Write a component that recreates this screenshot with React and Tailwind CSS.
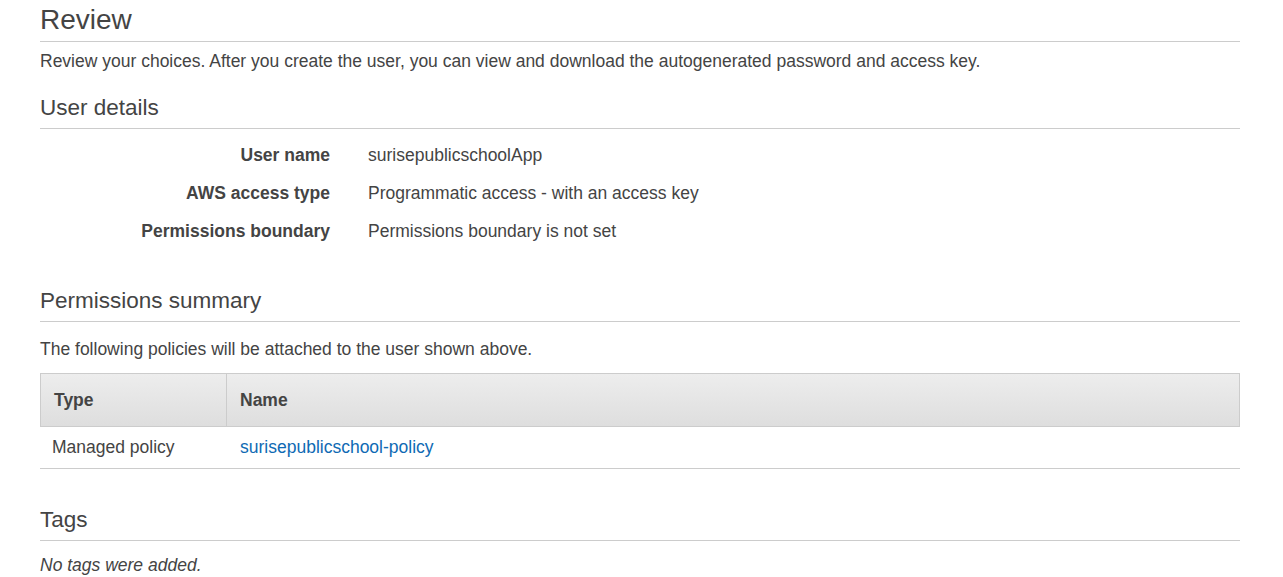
export default function App() {
  const rows = [
    ["User name", "surisepublicschoolApp"],
    ["AWS access type", "Programmatic access - with an access key"],
    ["Permissions boundary", "Permissions boundary is not set"],
  ];
  return (
    <div className="w-[1283px] h-[577px] overflow-hidden bg-white text-[#444] font-['Liberation_Sans',Arial,sans-serif]">
      <div className="w-[1200px] ml-[40px]">
        <h1 className="pt-[4px] pb-[6px] text-[28px] leading-[31px] font-normal border-b border-[#ccc]">Review</h1>
        <p className="mt-[7px] text-[17.5px] leading-[24px]">
          Review your choices. After you create the user, you can view and download the autogenerated password and access key.
        </p>

        <h2 className="mt-[22px] pb-[7px] text-[22.5px] leading-[26px] font-normal border-b border-[#ccc]">User details</h2>
        <div className="mt-[14px] flex flex-col gap-[14px]">
          {rows.map(([k, v]) => (
            <div key={k} className="flex text-[17.5px] leading-[24px]">
              <div className="w-[290px] text-right font-bold">{k}</div>
              <div className="ml-[38px]">{v}</div>
            </div>
          ))}
        </div>

        <h2 className="mt-[45px] pb-[7px] text-[22.5px] leading-[26px] font-normal border-b border-[#ccc]">Permissions summary</h2>
        <p className="mt-[15px] text-[17.5px] leading-[24px]">The following policies will be attached to the user shown above.</p>

        <div className="mt-[12px] text-[17.5px]">
          <div className="flex h-[54px] border border-[#ccc] bg-gradient-to-b from-[#ededed] to-[#dedede] font-bold">
            <div className="w-[186px] flex items-center pl-[13px] border-r border-[#ccc]">Type</div>
            <div className="flex-1 flex items-center pl-[13px]">Name</div>
          </div>
          <div className="flex h-[42px] border-b border-[#ccc] items-center">
            <div className="w-[187px] pl-[12px]">Managed policy</div>
            <div className="flex-1 pl-[13px] text-[#0f6ab4]">surisepublicschool-policy</div>
          </div>
        </div>

        <h2 className="mt-[38px] pb-[7px] text-[22.5px] leading-[26px] font-normal border-b border-[#ccc]">Tags</h2>
        <p className="mt-[12px] text-[17.5px] leading-[24px] italic">No tags were added.</p>
      </div>
    </div>
  );
}
